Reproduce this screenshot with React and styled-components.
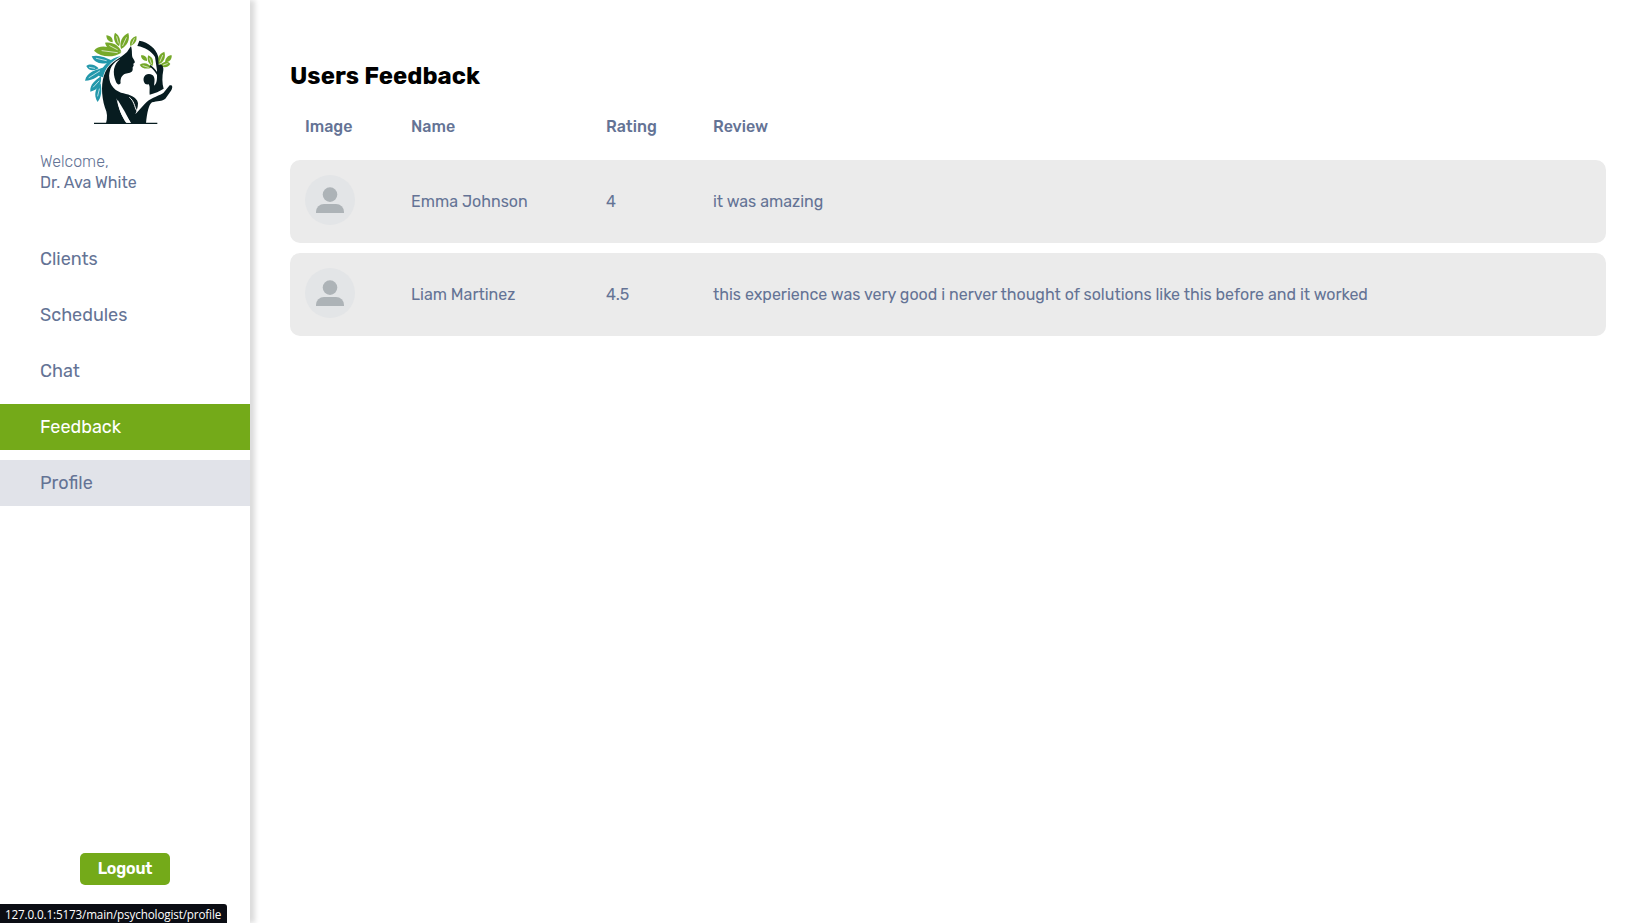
import React from "react";
import styled, { createGlobalStyle } from "styled-components";

const GlobalStyle = createGlobalStyle`
  * { box-sizing: border-box; }
  body {
    margin: 0;
    background: #fff;
    color: #647395;
    font: 400 16px/19px Rubik, Roboto, sans-serif;
  }
`;

const Page = styled.div`
  display: flex;
  height: 100vh;
  overflow: hidden;
`;

const Sidebar = styled.aside`
  display: flex;
  flex-direction: column;
  width: 250px;
  height: 100%;
  flex-shrink: 0;
  background: #fff;
  box-shadow: 5px 0 5px rgba(0, 0, 0, 0.14);
`;

const LogoLink = styled.a`
  display: block;
  height: 115px;
  margin: 20px 0 0 70px;
  svg { display: block; }
`;

const Greeting = styled.div`
  padding: 17px 40px 0;
  line-height: 20.5px;
`;

const Welcome = styled.div`
  font-weight: 300;
`;

const UserName = styled.div`
  font-weight: 400;
`;

const Nav = styled.nav`
  display: flex;
  flex-direction: column;
  gap: 10px;
  margin-top: 43px;
`;

const NavItem = styled.a`
  display: flex;
  align-items: center;
  height: 46px;
  padding-left: 40px;
  font-size: 18px;
  color: ${(p) => (p.$state === "active" ? "#fff" : "inherit")};
  background: ${(p) =>
    ({ active: "#74aa19", hover: "#e1e3e9" })[p.$state] || "transparent"};
`;

const Logout = styled.button`
  width: 90px;
  height: 32px;
  margin: auto auto 38px;
  padding: 0;
  border: 0;
  border-radius: 5px;
  background: #74aa19;
  color: #fff;
  font: 600 16px/32px Rubik, Roboto, sans-serif;
  letter-spacing: -0.2px;
`;

const Main = styled.main`
  flex: 1;
  padding: 61px 40px 0;
`;

const Title = styled.h1`
  margin: 0;
  color: #000;
  font-size: 24px;
  font-weight: 700;
  line-height: 30px;
`;

const Grid = styled.div`
  display: grid;
  grid-template-columns: 106px 195px 107px 1fr;
  align-items: center;
  padding: 0 15px;
`;

const HeaderRow = styled(Grid)`
  height: 69px;
  padding-top: 1px;
  font-weight: 500;
`;

const Rows = styled.div`
  display: flex;
  flex-direction: column;
  gap: 10px;
`;

const Row = styled(Grid)`
  height: 83px;
  border-radius: 10px;
  background: #ebebeb;
`;

const Avatar = styled.svg`
  display: block;
  align-self: start;
  width: 50px;
  height: 50px;
  margin-top: 15px;
`;

const StatusBar = styled.div`
  position: fixed;
  left: 0;
  bottom: 0;
  width: 227px;
  height: 19px;
  padding-left: 5px;
  border-radius: 0 3px 0 0;
  background: #0b0d14;
  color: #fff;
  font: 11.7px/20px "Segoe UI", "Open Sans", sans-serif;
  letter-spacing: -0.15px;
  white-space: nowrap;
`;

function Logo() {
  return (
    <svg width="115" height="115" viewBox="0 0 345 345">
      <g fill="#76a92a">
        <path d="M72 92C86 74 118 76 154 98C130 114 93 113 72 92Z" />
        <path d="M105 68C126 64 148 76 154 95C131 96 110 89 105 68Z" />
        <path d="M109 46C122 47 129 55 128 67C115 65 109 57 109 46Z" />
        <path d="M135 38C150 47 153 62 147 79C132 68 129 53 135 38Z" />
        <path d="M175 39C181 58 172 78 153 87C147 67 156 48 175 39Z" />
        <path d="M199 48C202 61 195 73 181 78C177 64 185 53 199 48Z" />
        <path d="M213 106C226 105 232 113 231 123C220 123 213 116 213 106Z" />
        <path d="M235 106C250 113 252 126 247 138C234 131 230 118 235 106Z" />
        <path d="M209 134C223 126 237 131 244 143C229 149 215 145 209 134Z" />
        <path d="M283 95C288 112 282 127 265 133C259 116 267 101 283 95Z" />
        <path d="M305 106C306 119 299 126 285 127C286 114 294 106 305 106Z" />
        <path d="M269 136C281 122 295 122 301 132C293 144 281 145 269 136Z" />
      </g>
      <g fill="#2398ab">
        <path d="M65 109C86 103 106 113 128 122C98 138 73 130 65 109Z" />
        <path d="M49 138C61 129 76 135 86 145C72 155 54 152 49 138Z" />
        <path d="M45 182C51 155 77 150 106 141C92 170 70 181 45 182Z" />
        <path d="M61 215C59 192 76 182 93 168C96 193 83 210 61 215Z" />
        <path d="M83 246C69 226 77 203 92 190C96 214 94 232 83 246Z" />
        <path d="M86 168C96 137 121 114 153 108C121 126 104 146 99 172Z" />
      </g>
      <g fill="none" stroke="#fff" strokeWidth="2" strokeLinecap="round">
        <path d="M96 92L142 98M119 77L142 89M140 50L145 69M169 53L158 77M193 56L186 72" />
        <path d="M239 116L244 131M219 137L235 142M278 106L270 124M280 135L292 131" />
        <path d="M79 115L109 122M58 142L74 145M57 173L89 153M70 201L87 183M83 228L88 207" />
      </g>
      <g fill="#071c20">
        <path d="M183 78C188 95 184 103 188 113C192 120 196 124 194 128L190 131L191 137L188 142L188 149C186 160 175 158 166 161C155 165 150 176 152 190C147 197 140 192 137 183C127 157 130 134 151 117C131 126 120 141 119 160C118 185 132 204 153 212C177 221 202 226 204 250C204 263 199 275 196 283L224 252C240 234 259 231 280 219L299 196C308 193 309 202 303 212L286 236C278 244 260 242 246 247C236 254 231 280 228 310L184 310C169 289 151 262 139 235C147 269 153 284 169 310L108 310C113 292 112 279 105 263C93 225 93 184 106 156C121 124 151 116 171 96Z" />
        <path d="M208 62C236 67 259 87 264 108L266 134C276 131 281 139 280 150C276 170 276 190 281 206C269 214 255 219 239 224C238 209 241 200 236 193C224 196 219 184 221 174C223 163 237 158 247 165C256 171 254 185 252 197C263 190 261 172 261 151L255 111C244 93 225 82 202 78Z" />
        <path d="M72 308H262V312H72Z" />
      </g>
      <path d="M240 137C251 146 260 156 265 168" fill="none" stroke="#071c20" strokeWidth="5" />
      <path d="M143 239C157 261 170 284 182 308H170C154 288 145 264 143 239Z" fill="#fff" />
      <path d="M119 154C119 185 137 203 158 209C181 215 201 223 204 245C193 225 173 223 153 218C129 210 112 187 119 154Z" fill="#fff" />
      <path d="M178 232C192 242 193 259 200 272" fill="none" stroke="#fff" strokeWidth="3" />
    </svg>
  );
}

function UserAvatar() {
  return (
    <Avatar viewBox="0 0 50 50">
      <circle cx="25" cy="25" r="25" fill="#e3e5e7" />
      <circle cx="25" cy="19.6" r="7.3" fill="#adb3b7" />
      <path d="M11 38v-1A8 8 0 0 1 19 29h12A8 8 0 0 1 39 37v1Z" fill="#adb3b7" />
    </Avatar>
  );
}

const navItems = [
  { label: "Clients" },
  { label: "Schedules" },
  { label: "Chat" },
  { label: "Feedback", state: "active" },
  { label: "Profile", state: "hover" },
];

const reviews = [
  { name: "Emma Johnson", rating: "4", text: "it was amazing" },
  {
    name: "Liam Martinez",
    rating: "4.5",
    text: "this experience was very good i nerver thought of solutions like this before and it worked",
  },
];

export default function App() {
  return (
    <Page>
      <GlobalStyle />
      <Sidebar>
        <LogoLink><Logo /></LogoLink>
        <Greeting>
          <Welcome>Welcome,</Welcome>
          <UserName>Dr. Ava White</UserName>
        </Greeting>
        <Nav>
          {navItems.map((n) => (
            <NavItem key={n.label} $state={n.state}>
              {n.label}
            </NavItem>
          ))}
        </Nav>
        <Logout>Logout</Logout>
      </Sidebar>
      <Main>
        <Title>Users Feedback</Title>
        <HeaderRow>
          <span>Image</span>
          <span>Name</span>
          <span>Rating</span>
          <span>Review</span>
        </HeaderRow>
        <Rows>
          {reviews.map((r) => (
            <Row key={r.name}>
              <UserAvatar />
              <span>{r.name}</span>
              <span>{r.rating}</span>
              <span>{r.text}</span>
            </Row>
          ))}
        </Rows>
      </Main>
      <StatusBar>127.0.0.1:5173/main/psychologist/profile</StatusBar>
    </Page>
  );
}
